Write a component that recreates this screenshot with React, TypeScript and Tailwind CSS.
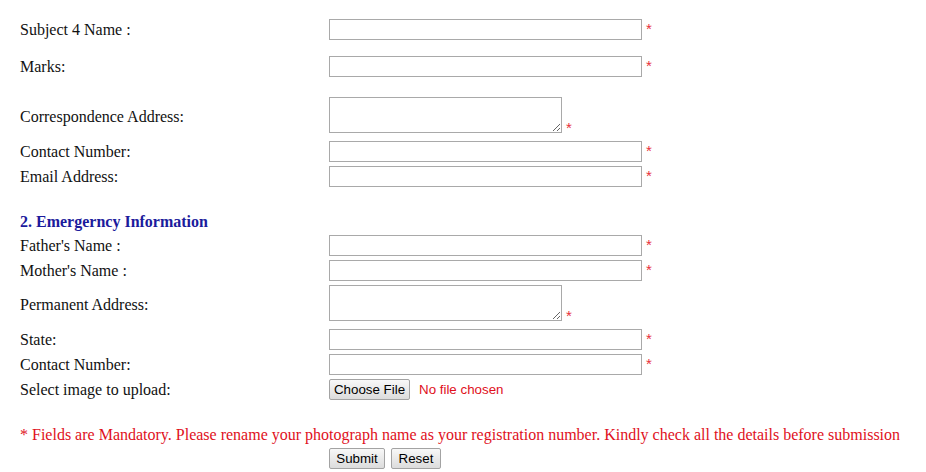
import React from "react";

const serif = { fontFamily: '"Liberation Serif", "Times New Roman", serif' };
const sans = { fontFamily: '"Liberation Sans", Arial, sans-serif' };

function Star({ top }: { top: string }) {
  return (
    <span
      className={`ml-[4px] self-start text-[15px] leading-none text-[#e8303a] ${top}`}
      style={sans}
    >
      *
    </span>
  );
}

function InputRow({ label, mt }: { label: string; mt: string }) {
  return (
    <div className={`flex h-[21px] items-center ${mt}`}>
      <label className="w-[309px] shrink-0 pt-[1px] text-[16px] leading-[18px] text-[#111]">
        {label}
      </label>
      <div className="flex h-[21px]">
        <input
          type="text"
          className="h-[21px] w-[313px] border border-[#a9a9a9] bg-white px-[2px] text-[13px] outline-none"
        />
        <Star top="mt-[2px]" />
      </div>
    </div>
  );
}

function AreaRow({ label, mt }: { label: string; mt: string }) {
  return (
    <div className={`flex h-[36px] items-center ${mt}`}>
      <label className="w-[309px] shrink-0 pt-[4px] text-[16px] leading-[18px] text-[#111]">
        {label}
      </label>
      <div className="flex h-[36px]">
        <textarea className="h-[36px] w-[233px] resize border border-[#a9a9a9] bg-white outline-none" />
        <Star top="mt-[23px]" />
      </div>
    </div>
  );
}

function Btn({ children, w }: { children: React.ReactNode; w: string }) {
  return (
    <button
      type="button"
      className={`h-[21px] ${w} rounded-[2px] border border-[#a3a3a3] bg-gradient-to-b from-[#f8f8f8] to-[#dcdcdc] text-[13.33px] leading-[19px] text-black`}
      style={sans}
    >
      {children}
    </button>
  );
}

export default function App() {
  return (
    <div className="h-[472px] w-[926px] overflow-hidden bg-white pl-[20px] pt-[19px]" style={serif}>
      <InputRow label="Subject 4 Name :" mt="" />
      <InputRow label="Marks:" mt="mt-[16px]" />
      <AreaRow label="Correspondence Address:" mt="mt-[20px]" />
      <InputRow label="Contact Number:" mt="mt-[8px]" />
      <InputRow label="Email Address:" mt="mt-[4px]" />

      <h3 className="mt-[26px] h-[18px] text-[16px] font-bold leading-[18px] text-[#1b1b9c]">
        2. Emergerncy Information
      </h3>

      <InputRow label="Father's Name :" mt="mt-[4px]" />
      <InputRow label="Mother's Name :" mt="mt-[4px]" />
      <AreaRow label="Permanent Address:" mt="mt-[4px]" />
      <InputRow label="State:" mt="mt-[8px]" />
      <InputRow label="Contact Number:" mt="mt-[4px]" />

      <div className="mt-[4px] flex h-[21px] items-center">
        <label className="w-[309px] shrink-0 pt-[1px] text-[16px] leading-[18px] text-[#111]">
          Select image to upload:
        </label>
        <Btn w="w-[81px]">Choose File</Btn>
        <span className="ml-[9px] text-[13.33px] text-[#e0101c]" style={sans}>
          No file chosen
        </span>
      </div>

      <p className="mt-[26px] h-[18px] text-[16px] leading-[18px] text-[#e0101c]">
        * Fields are Mandatory. Please rename your photograph name as your registration number. Kindly check all the details before submission
      </p>

      <div className="mt-[4px] flex gap-[6px] pl-[309px]">
        <Btn w="w-[56px]">Submit</Btn>
        <Btn w="w-[50px]">Reset</Btn>
      </div>
    </div>
  );
}
